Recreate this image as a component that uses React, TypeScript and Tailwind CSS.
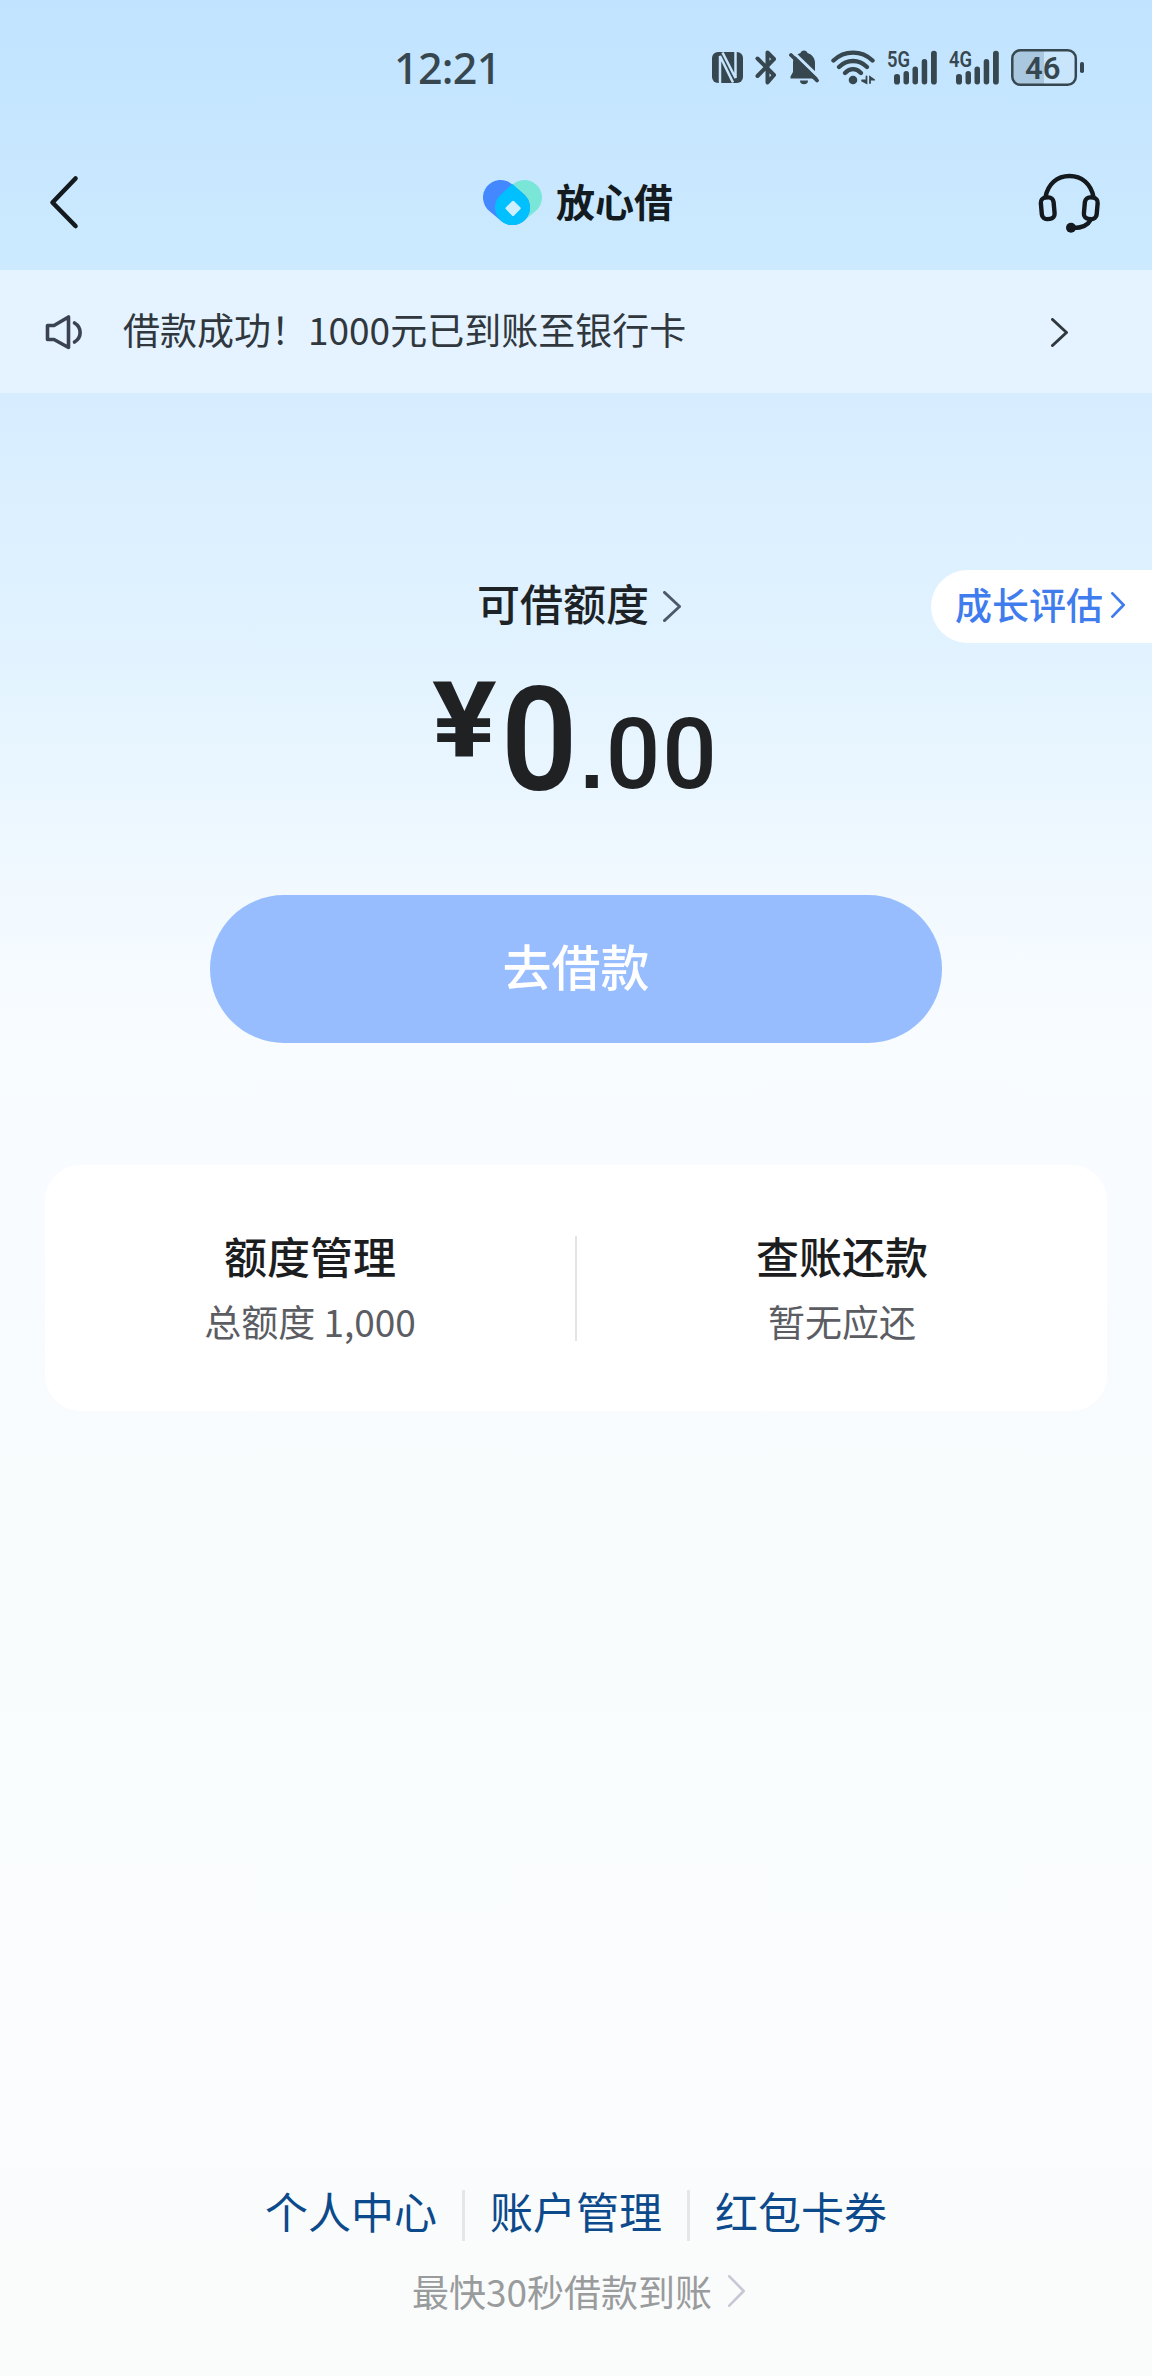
import { clsx } from "clsx";

const NOTICE = "借款成功！1000元已到账至银行卡";

const entries = [
  { title: "额度管理", desc: "总额度 1,000" },
  { title: "查账还款", desc: "暂无应还" },
];

const links = ["个人中心", "账户管理", "红包卡券"];

function Chevron({ w, h, stroke = 3, className }: { w: number; h: number; stroke?: number; className?: string }) {
  const p = stroke / 2;
  return (
    <svg width={w} height={h} fill="none" stroke="currentColor" strokeWidth={stroke} className={clsx("shrink-0", className)}>
      <path d={`M${p} ${p} L${w - p} ${h / 2} L${p} ${h - p}`} strokeLinejoin="round" strokeLinecap="round" />
    </svg>
  );
}

function Signal({ label }: { label: string }) {
  return (
    <svg width="50" height="38" viewBox="0 0 50 38" fill="currentColor" className="overflow-visible">
      <text x="0" y="18" fontSize="22.5" fontWeight="600" textLength="23" lengthAdjust="spacingAndGlyphs" fontFamily="Roboto, sans-serif">{label}</text>
      <rect x="7" y="25" width="6" height="10.5" rx="2.8" />
      <rect x="16.5" y="22" width="5.5" height="13.5" rx="2.7" />
      <rect x="25.5" y="17.5" width="5.5" height="18" rx="2.7" />
      <rect x="34.7" y="10" width="5.5" height="25.5" rx="2.7" />
      <rect x="44" y="1.7" width="5.8" height="33.8" rx="2.8" />
    </svg>
  );
}

function StatusBar() {
  return (
    <div className="flex h-[136px] items-center justify-between pl-[394px] pr-[68px] text-[#37474f]">
      <span className="pb-[1px] font-['Noto_Sans'] text-[43px] font-medium leading-none tracking-[-0.7px]">12:21</span>
      <div className="flex items-center gap-3">
        <svg width="31" height="38" viewBox="0 0 31 38">
          <rect x="0" y="3" width="31" height="31" rx="6" fill="currentColor" />
          <path d="M8 34 V7 L21 33.5 M10.5 3.5 L23.5 29 V3" stroke="#c5e5ff" strokeWidth="2.5" fill="none" />
        </svg>
        <svg width="22" height="38" viewBox="0 0 22 38" fill="none" stroke="currentColor" strokeWidth="4" strokeLinejoin="round" strokeLinecap="round">
          <path d="M2.5 9.5 L19 26 L12.5 33.5 V3.5 L19 10 L2.5 27" />
        </svg>
        <svg width="30" height="38" viewBox="0 0 30 38">
          <path d="M15 1.5 c2 0 3 1 3.5 2.5 c5 1.5 7.5 5.5 7.5 10 v9 l3 4.5 v2 H1.5 v-2 L4 23 V14 c0-4.5 2.5-8.5 7.5-10 c.5-1.5 1.5-2.5 3.5-2.5z M11 31.5 h8 a4 3.8 0 0 1 -8 0z" fill="currentColor" />
          <path d="M3 2 L32 30" stroke="#c5e5ff" strokeWidth="3" />
          <path d="M2 6 L28 31.5" stroke="currentColor" strokeWidth="3.8" strokeLinecap="round" />
        </svg>
        <svg width="44" height="38" viewBox="0 0 44 38" fill="none" stroke="currentColor" strokeWidth="4.4" strokeLinecap="round">
          <path d="M2.5 11.5 C13.5 1 30.5 1 41.5 11.5" />
          <path d="M8 18 C16 10 28 10 36 18" />
          <path d="M14 24 C19 19 25 19 30 24" />
          <circle cx="22" cy="31" r="4.3" fill="currentColor" stroke="none" />
          <path d="M35.5 27.5 V34 L30.5 31.5 H35.5 M39 34 V28 L42.5 30.5 H39" strokeWidth="1.8" />
        </svg>
        <Signal label="5G" />
        <Signal label="4G" />
        <svg width="73" height="38" viewBox="0 0 73 38" fill="none">
          <rect x="1.3" y="1.3" width="63.5" height="34.4" rx="8" fill="#c9e5fb" />
          <path d="M33 2 H9 a7 7 0 0 0 -7 7 v19 a7 7 0 0 0 7 7 h24z" fill="#a9c8df" />
          <rect x="1.3" y="1.3" width="63.5" height="34.4" rx="8" stroke="currentColor" strokeWidth="2.5" />
          <rect x="69" y="13" width="4" height="11" rx="1.8" fill="currentColor" />
          <text x="14" y="30" fontSize="32" fontWeight="600" textLength="35.5" lengthAdjust="spacingAndGlyphs" fontFamily="Roboto, sans-serif" fill="currentColor">46</text>
        </svg>
      </div>
    </div>
  );
}

function Logo() {
  return (
    <div className="flex items-center gap-[14px] pl-[7px]">
      <svg width="59" height="45" viewBox="0 0 59 45" fill="none" strokeLinecap="round" strokeWidth="35" className="-mt-[2px]">
        <path d="M41.5 17.5 L29.5 27.5" stroke="#7ae6d7" />
        <path d="M17.5 17.5 L29.5 27.5" stroke="#4388ff" />
        <path d="M29.5 4 L41.8 15.2 A17.5 17.5 0 1 1 17.2 15.2 Z" fill="#00c0ff" />
        <rect x="24.3" y="22.5" width="11.6" height="11.6" rx="1.5" fill="#cdeeff" transform="rotate(45 30.1 28.3)" />
      </svg>
      <h1 className="pb-[6px] text-[39px] font-bold leading-[44px] text-[#131a20]">放心借</h1>
    </div>
  );
}

function Header() {
  return (
    <header className="flex h-[134px] items-center justify-between pl-[49px] pr-[51px] text-[#14191d]">
      <svg width="62" height="60" viewBox="0 0 62 60" fill="none" stroke="currentColor" strokeWidth="4.6" strokeLinecap="round" strokeLinejoin="round">
        <path d="M26.5 5.5 L3.5 29.5 L26.5 53" />
      </svg>
      <Logo />
      <svg width="63" height="62" viewBox="0 0 63 62" fill="none" stroke="currentColor" strokeWidth="4.4" strokeLinecap="round" className="mt-[2px]">
        <path d="M7.5 24 C10 11 19 3 31.5 3 S53 11 55.5 24" />
        <rect x="3.3" y="24.5" width="12.8" height="21.5" rx="5" transform="rotate(-5 9.7 35)" />
        <rect x="46.4" y="24.5" width="12.8" height="21.5" rx="5" transform="rotate(5 52.8 35)" />
        <path d="M52.5 47 C50 52 44 55 35 55" />
        <circle cx="33" cy="54.7" r="5" fill="currentColor" stroke="none" />
      </svg>
    </header>
  );
}

function Notice() {
  return (
    <div className="flex h-[123px] items-center bg-[#e4f3ff] pl-[45px] pr-[84px] text-[#30373d]">
      <svg width="38" height="36" viewBox="0 0 38 36" fill="none" stroke="#3c4350" strokeWidth="3.6" strokeLinejoin="round" strokeLinecap="round">
        <path d="M2.5 11.5 H9 L23.5 3 V33.5 L9 25.5 H2.5 Z" />
        <path d="M29.5 9 C37 13.5 37 23.5 29.5 28" />
      </svg>
      <p className="ml-[40px] flex-1 pb-[6px] text-[37px] leading-[54px]">{NOTICE}</p>
      <Chevron w={17} h={29} stroke={3} className="mt-[2px]" />
    </div>
  );
}

export default function App() {
  return (
    <div className="flex h-[2376px] w-[1152px] flex-col overflow-hidden bg-[linear-gradient(180deg,#c1e3ff_0px,#cceaff_260px,#d7edff_400px,#e2f3ff_660px,#f1f9ff_890px,#f9fcff_1050px,#f8fbff_1250px,#f9fcfd_1500px,#fafcfc_2376px)] font-['Noto_Sans_CJK_SC',sans-serif]">
      <StatusBar />
      <Header />
      <Notice />

      <section className="grid grid-cols-[1fr_auto_1fr] items-center pt-[177px]">
        <div />
        <div className="flex items-center gap-[14px] pl-[6px] text-[#1d2226]">
          <span className="pb-[10px] text-[43px] font-medium leading-[60px]">可借额度</span>
          <Chevron w={18} h={31} stroke={2.8} className="text-[#4d5967]" />
        </div>
        <button className="flex h-[73px] w-[221px] items-center gap-[8px] justify-self-end rounded-l-full bg-white pl-[24px] text-[#3f7cee]">
          <span className="pb-[5px] text-[37px] font-medium leading-none">成长评估</span>
          <Chevron w={14} h={26} stroke={2.8} className="-mt-[4px]" />
        </button>
      </section>

      <div className="mt-[15px] flex h-[161px] justify-center pl-[3px] font-[Roboto] leading-none text-[#1f2123]">
        <span className="mt-[11px] origin-left scale-x-[1.15] text-[105px] font-bold">¥</span>
        <span className="ml-[10px] mt-[11px] scale-x-[0.93] text-[144px] font-semibold">0</span>
        <span className="mt-[47px] origin-left scale-x-[0.97] text-[99px] font-medium tracking-[2px]">
          <span className="font-['Liberation_Sans'] text-[88px] font-bold">.</span>00
        </span>
      </div>

      <button className="mt-[76px] h-[148px] w-[732px] self-center rounded-full bg-[#98bdff] pb-[9px] text-[49px] font-medium text-white">
        去借款
      </button>

      <section className="mx-[45px] mt-[122px] flex h-[246px] items-center rounded-[36px] bg-white">
        {entries.map((e, i) => (
          <div key={e.title} className={clsx("flex h-[105px] flex-1 flex-col items-center", i > 0 && "border-l-2 border-[#e3e4e6]")}>
            <div className="-mt-[13px] text-[43px] font-medium leading-[64px] text-[#1c1d1f]">{e.title}</div>
            <div className="mt-[7px] text-[37px] leading-[54px] text-[#5b5d63]">{e.desc}</div>
          </div>
        ))}
      </section>

      <footer className="mt-auto flex flex-col items-center pb-[58px]">
        <nav className="flex items-center">
          {links.map((l, i) => (
            <div key={l} className="flex items-center">
              {i > 0 && <span className="mx-[25px] mt-[4px] h-[51px] w-[3px] bg-[#e4e7e8]" />}
              <a className="-mt-[7px] text-[43px] leading-[64px] text-[#0c4a8c]">{l}</a>
            </div>
          ))}
        </nav>
        <div className="mt-[22px] flex items-center gap-[16px] pl-[5px] text-[#999b9c]">
          <span className="text-[37px] leading-[54px]">最快30秒借款到账</span>
          <Chevron w={17} h={32} stroke={2.6} className="text-[#c6c9d4]" />
        </div>
      </footer>
    </div>
  );
}
